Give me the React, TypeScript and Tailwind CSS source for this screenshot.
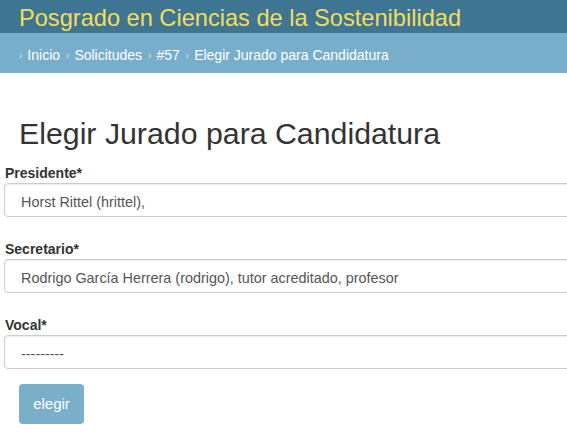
import React from "react";

const crumbs = ["Inicio", "Solicitudes", "#57", "Elegir Jurado para Candidatura"];

const fields = [
  { label: "Presidente*", value: "Horst Rittel (hrittel)," },
  { label: "Secretario*", value: "Rodrigo García Herrera (rodrigo), tutor acreditado, profesor" },
  { label: "Vocal*", value: "---------" },
];

export default function App() {
  return (
    <div className="w-[567px] h-[439px] overflow-hidden bg-white font-['Liberation_Sans',Arial,sans-serif]">
      {/* top header */}
      <div className="h-[33px] bg-[#3e7592] pl-[19px] pt-[5px]">
        <h1 className="text-[23.6px] leading-[26px] text-[#f2de5c]">Posgrado en Ciencias de la Sostenibilidad</h1>
      </div>

      {/* breadcrumbs */}
      <div className="h-[40px] bg-[#78aec9] pl-[19px] pt-[5px] flex items-center">
        <ul className="flex items-center text-[14px] text-white">
          {crumbs.map((c) => (
            <li key={c} className="flex items-center">
              <span className="text-[10px] text-[#cfe4ee] mr-[5px]">›</span>
              <span className="mr-[6px]">{c}</span>
            </li>
          ))}
        </ul>
      </div>

      <div className="pt-[44px]">
        <h2 className="pl-[19px] text-[30.3px] leading-[34px] text-[#333333]">Elegir Jurado para Candidatura</h2>

        <form className="mt-[13px] w-[620px]">
          {fields.map((f) => (
            <div key={f.label} className="pl-[4px] mb-[23px]">
              <label className="block pl-[1px] text-[14px] leading-[18px] font-bold text-[#333333]">{f.label}</label>
              <div className="mt-[1px] h-[34px] border border-[#cccccc] rounded-[4px] shadow-[inset_0_1px_1px_rgba(0,0,0,0.075)] pl-[16px] pt-[8px] leading-[20px] text-[14.4px] text-[#555555]">
                {f.value}
              </div>
            </div>
          ))}
          <div className="pl-[19px] -mt-[8px]">
            <button type="button" className="w-[65px] h-[40px] rounded-[4px] bg-[#7aafc9] text-white text-[15px]">
              elegir
            </button>
          </div>
        </form>
      </div>
    </div>
  );
}
